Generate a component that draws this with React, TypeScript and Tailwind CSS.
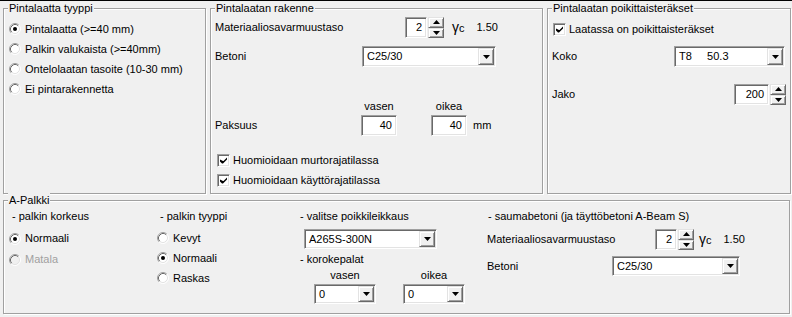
import type { ReactNode } from 'react';

const sunken =
  'border border-t-[#a0a0a0] border-l-[#a0a0a0] border-r-white border-b-white shadow-[inset_1px_1px_0_#696969,inset_-1px_-1px_0_#e3e3e3]';
const raised =
  'border border-t-[#e3e3e3] border-l-[#e3e3e3] border-r-[#696969] border-b-[#696969] shadow-[inset_1px_1px_0_#fff,inset_-1px_-1px_0_#a0a0a0]';

function Group({ title, className, children }: { title: string; className: string; children?: ReactNode }) {
  return (
    <div className={`relative border border-[#a0a0a0] shadow-[inset_1px_1px_0_#fff,1px_1px_0_#fff] ${className}`}>
      <span className="absolute left-[4px] top-[-8px] bg-[#f0f0f0] px-px leading-[14px]">{title}</span>
      {children}
    </div>
  );
}

function Radio({ checked, disabled, label }: { checked?: boolean; disabled?: boolean; label: string }) {
  return (
    <div className="flex items-center h-full gap-[4px]">
      <svg width="12" height="12" viewBox="0 0 12 12" className="shrink-0">
        <circle cx="6" cy="6" r="5" fill={disabled ? '#f0f0f0' : '#fff'} />
        <path d="M2.11 9.89A5.5 5.5 0 0 1 9.89 2.11" stroke="#a0a0a0" fill="none" />
        <path d="M2.82 9.18A4.5 4.5 0 0 1 9.18 2.82" stroke="#696969" fill="none" />
        <path d="M9.89 2.11A5.5 5.5 0 0 1 2.11 9.89" stroke="#fff" fill="none" />
        <path d="M9.18 2.82A4.5 4.5 0 0 1 2.82 9.18" stroke="#e3e3e3" fill="none" />
        {checked && <circle cx="6" cy="6" r="2" fill={disabled ? '#a0a0a0' : '#000'} />}
      </svg>
      <span className={disabled ? 'text-[#a0a0a0]' : ''}>{label}</span>
    </div>
  );
}

function Check({ label }: { label: string }) {
  return (
    <div className="flex items-center h-full gap-[3px]">
      <span className={`w-[13px] h-[13px] bg-white flex items-center justify-center ${sunken}`}>
        <svg width="7" height="7" viewBox="0 0 7 7">
          <path d="M0 2.5v2l2 2h1l4-4v-2l-3.5 3.5h-0.5z" fill="#000" />
        </svg>
      </span>
      <span>{label}</span>
    </div>
  );
}

function Arrow({ up }: { up?: boolean }) {
  return (
    <svg width="7" height="4" viewBox="0 0 7 4">
      <path d={up ? 'M0 4h7L3.5 0z' : 'M0 0h7L3.5 4z'} fill="#000" />
    </svg>
  );
}

function Combo({ value, className }: { value: string; className: string }) {
  return (
    <div className={`flex bg-white p-px ${sunken} ${className}`}>
      <span className="flex-1 pl-[3px] flex items-center whitespace-pre overflow-hidden">{value}</span>
      <span className={`w-[16px] flex items-center justify-center bg-[#f0f0f0] ${raised}`}>
        <Arrow />
      </span>
    </div>
  );
}

function Edit({ value, className }: { value: string; className: string }) {
  return <div className={`h-full bg-white flex items-center justify-end pr-[4px] ${sunken} ${className}`}>{value}</div>;
}

function Spin({ value, className }: { value: string; className: string }) {
  return (
    <div className="flex h-full">
      <Edit value={value} className={className} />
      <div className="flex flex-col w-[16px] ml-px">
        <span className={`flex-1 flex items-center justify-center bg-[#f0f0f0] ${raised}`}>
          <Arrow up />
        </span>
        <span className={`flex-1 flex items-center justify-center bg-[#f0f0f0] ${raised}`}>
          <Arrow />
        </span>
      </div>
    </div>
  );
}

function Gamma({ className }: { className: string }) {
  return (
    <div className={`flex items-center ${className}`}>
      <span className="text-[14px] leading-[13px]">γ</span>
      <span className="mt-[2px]">c</span>
      <span className="ml-[12px]">1.50</span>
    </div>
  );
}

export default function App() {
  return (
    <div className="w-[792px] h-[317px] bg-[#f0f0f0] text-black text-[11px] leading-[13px] font-['Liberation_Sans',Arial,sans-serif] overflow-hidden">
      <div className="h-px bg-black" />

      {/* top row */}
      <div className="flex pt-[7px]">
        <Group title="Pintalaatta tyyppi" className="ml-[3px] w-[203px] h-[186px]">
          <div className="flex flex-col pt-[10px] pl-[5px]">
            <div className="h-[20px]"><Radio checked label="Pintalaatta (>=40 mm)" /></div>
            <div className="h-[20px]"><Radio label="Palkin valukaista (>=40mm)" /></div>
            <div className="h-[20px]"><Radio label="Ontelolaatan tasoite (10-30 mm)" /></div>
            <div className="h-[20px]"><Radio label="Ei pintarakennetta" /></div>
          </div>
        </Group>

        <Group title="Pintalaatan rakenne" className="ml-[4px] w-[333px] h-[186px]">
          <div className="flex flex-col pl-[4px]">
            <div className="mt-[8px] h-[21px] flex items-center">
              <span className="w-[190px]">Materiaaliosavarmuustaso</span>
              <Spin value="2" className="w-[22px]" />
              <Gamma className="ml-[8px]" />
            </div>
            <div className="mt-[8px] h-[21px] flex items-center">
              <span className="w-[147px]">Betoni</span>
              <Combo value="C25/30" className="w-[134px] h-full" />
            </div>
            <div className="mt-[33px] h-[13px] flex">
              <span className="w-[146px]" />
              <span className="w-[36px] text-center">vasen</span>
              <span className="w-[36px] ml-[34px] text-center">oikea</span>
            </div>
            <div className="mt-[2px] h-[21px] flex items-center">
              <span className="w-[146px]">Paksuus</span>
              <Edit value="40" className="w-[36px]" />
              <Edit value="40" className="w-[36px] ml-[34px]" />
              <span className="ml-[6px]">mm</span>
            </div>
            <div className="mt-[14px] h-[20px] pl-[2px]"><Check label="Huomioidaan murtorajatilassa" /></div>
            <div className="h-[20px] pl-[2px]"><Check label="Huomioidaan käyttörajatilassa" /></div>
          </div>
        </Group>

        <Group title="Pintalaatan poikittaisteräkset" className="ml-[4px] w-[244px] h-[186px]">
          <div className="flex flex-col">
            <div className="mt-[10px] h-[20px] pl-[5px]"><Check label="Laatassa on poikittaisteräkset" /></div>
            <div className="mt-[7px] h-[21px] pl-[4px] flex items-center">
              <span className="w-[122px]">Koko</span>
              <Combo value={'T8     50.3'} className="w-[111px] h-full" />
            </div>
            <div className="mt-[17px] h-[21px] pl-[4px] flex items-center">
              <span className="w-[182px]">Jako</span>
              <Spin value="200" className="w-[35px]" />
            </div>
          </div>
        </Group>
      </div>

      {/* A-Palkki */}
      <Group title="A-Palkki" className="mt-[6px] ml-[3px] w-[787px] h-[114px]">
        <div className="flex pt-[9px]">
          <div className="w-[152px] flex flex-col">
            <span className="h-[13px] pl-[8px]">- palkin korkeus</span>
            <div className="mt-[5px] h-[21px] pl-[5px]"><Radio checked label="Normaali" /></div>
            <div className="h-[21px] pl-[5px]"><Radio disabled label="Matala" /></div>
          </div>
          <div className="w-[144px] flex flex-col">
            <span className="h-[13px] pl-[4px]">- palkin tyyppi</span>
            <div className="mt-[5px] h-[20px] pl-px"><Radio label="Kevyt" /></div>
            <div className="h-[20px] pl-px"><Radio checked label="Normaali" /></div>
            <div className="h-[20px] pl-px"><Radio label="Raskas" /></div>
          </div>
          <div className="w-[187px] flex flex-col">
            <span className="h-[13px]">- valitse poikkileikkaus</span>
            <Combo value="A265S-300N" className="mt-[6px] ml-[4px] w-[133px] h-[20px]" />
            <span className="mt-[4px] h-[13px]">- korokepalat</span>
            <div className="mt-[3px] h-[13px] flex">
              <span className="ml-[14px] w-[62px] text-center">vasen</span>
              <span className="ml-[27px] w-[62px] text-center">oikea</span>
            </div>
            <div className="mt-[2px] h-[20px] flex">
              <Combo value="0" className="ml-[14px] w-[62px] h-full" />
              <Combo value="0" className="ml-[27px] w-[62px] h-full" />
            </div>
          </div>
          <div className="flex-1 flex flex-col">
            <span className="h-[13px] pl-px">- saumabetoni (ja täyttöbetoni A-Beam S)</span>
            <div className="mt-[6px] h-[21px] flex items-center">
              <span className="w-[168px]">Materiaaliosavarmuustaso</span>
              <Spin value="2" className="w-[22px]" />
              <Gamma className="ml-[5px]" />
            </div>
            <div className="mt-[6px] h-[20px] flex items-center">
              <span className="w-[125px]">Betoni</span>
              <Combo value="C25/30" className="w-[128px] h-full" />
            </div>
          </div>
        </div>
      </Group>
    </div>
  );
}
